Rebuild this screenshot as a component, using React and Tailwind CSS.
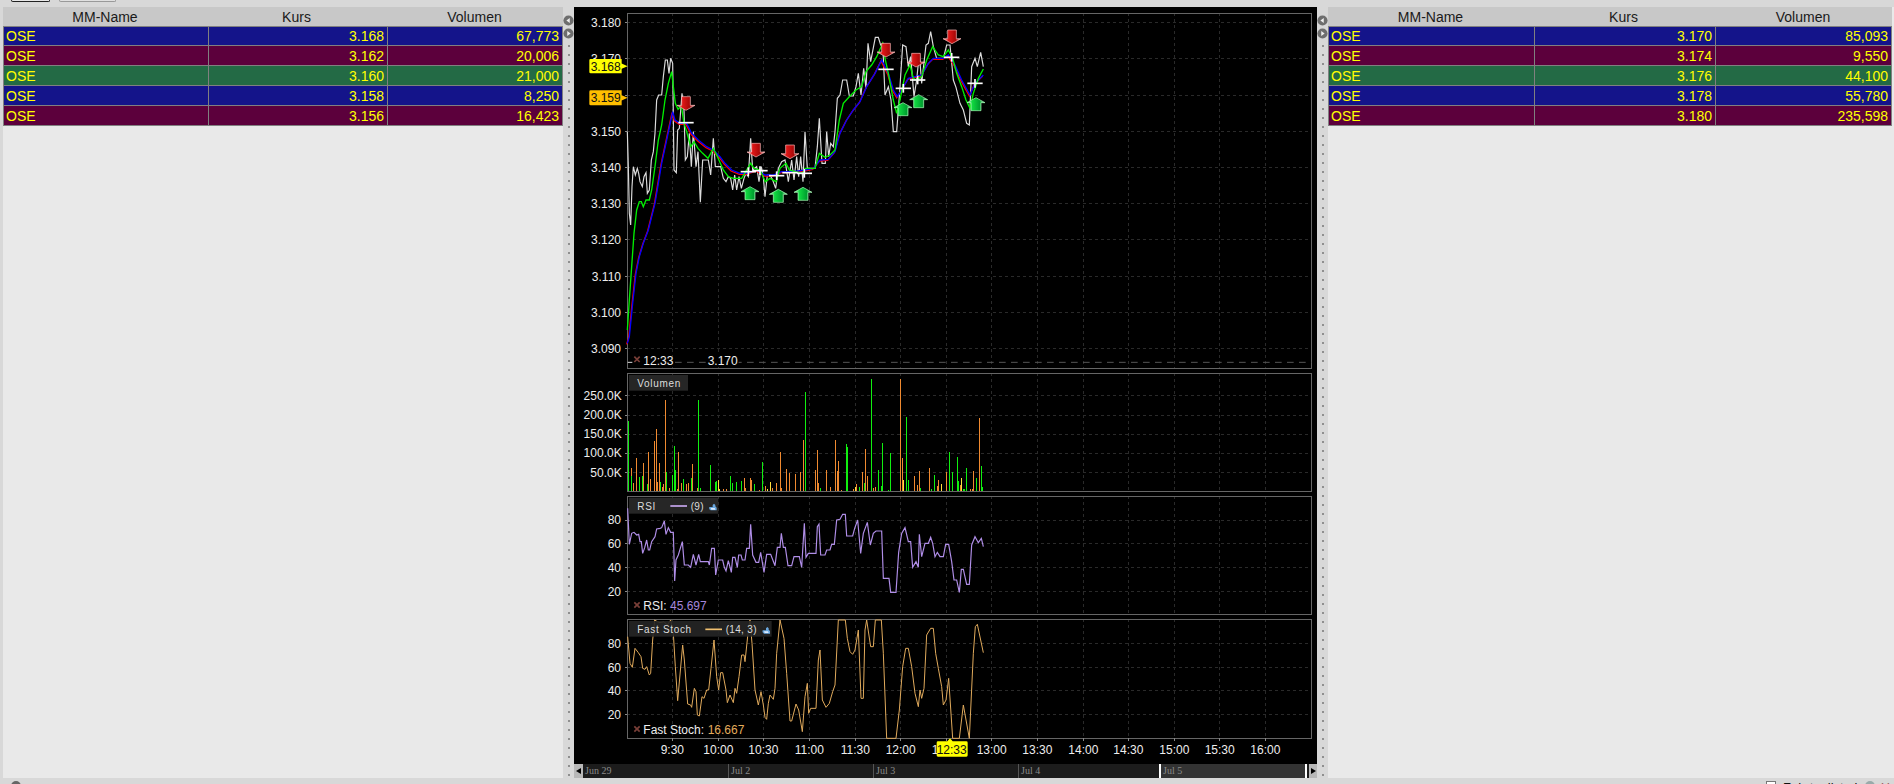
import React from 'react';

// all chart coordinates are in 3x pixels, one stroke of 3 = 1px on screen
const gridXs = [337, 475, 610, 748, 886, 1022, 1160, 1295, 1432, 1570, 1705, 1843, 1979, 2116];
const PLOT_L = 202;
const PLOT_R = 2255;

const bidRows = [
  ['OSE', '3.168', '67,773', 'blue'],
  ['OSE', '3.162', '20,006', 'maroon'],
  ['OSE', '3.160', '21,000', 'green'],
  ['OSE', '3.158', '8,250', 'blue'],
  ['OSE', '3.156', '16,423', 'maroon'],
];
const askRows = [
  ['OSE', '3.170', '85,093', 'blue'],
  ['OSE', '3.174', '9,550', 'maroon'],
  ['OSE', '3.176', '44,100', 'green'],
  ['OSE', '3.178', '55,780', 'blue'],
  ['OSE', '3.180', '235,598', 'maroon'],
];
const rowColors = { blue: 'bg-[#14148a]', maroon: 'bg-[#5c003c]', green: 'bg-[#236a45]' };

const priceLine = '202,395 205,500 208,640 212,675 216,560 220,500 226,525 232,505 236,520 240,545 247,560 252,530 258,518 262,580 268,570 274,480 280,455 285,400 290,300 296,285 305,285 310,230 316,180 322,180 327,220 332,175 338,190 342,510 349,518 353,390 358,385 366,280 372,330 376,480 382,470 388,400 394,500 400,395 408,500 414,455 421,607 428,480 445,480 452,525 460,415 466,500 482,500 490,535 498,545 505,530 512,535 518,570 524,525 530,570 537,530 544,565 552,535 558,520 565,530 572,415 578,510 590,500 597,545 604,500 610,530 615,590 622,525 630,525 638,540 647,565 655,505 665,485 675,480 685,545 695,480 702,540 710,470 716,530 722,470 729,545 735,395 742,505 765,505 772,440 778,355 786,490 796,490 800,395 806,470 812,430 820,440 825,395 832,295 840,285 848,240 860,240 868,288 880,288 888,260 895,220 903,285 911,205 918,265 924,130 932,185 946,112 955,112 962,135 968,130 975,285 985,260 993,300 1000,395 1010,395 1018,290 1028,135 1038,140 1045,200 1052,170 1062,290 1070,240 1078,160 1085,250 1098,135 1105,130 1112,95 1120,140 1130,175 1150,175 1160,135 1170,135 1180,240 1188,262 1200,310 1210,330 1220,370 1228,375 1235,200 1245,175 1252,200 1262,157 1270,200';
const fastMa = '202,990 208,900 215,800 222,700 230,630 238,605 244,605 250,620 258,600 268,600 275,570 285,500 295,420 305,375 315,300 325,250 335,215 340,260 346,310 354,328 364,318 372,370 380,395 392,440 402,425 414,445 428,460 444,475 460,445 470,465 490,510 505,530 520,535 545,535 560,510 572,490 582,505 600,510 616,545 630,535 648,545 660,505 678,490 688,510 705,515 728,520 735,505 765,505 778,460 795,472 810,465 825,450 838,360 850,310 870,288 888,270 905,260 918,215 935,195 950,170 968,130 975,175 985,220 1000,300 1010,340 1020,300 1035,225 1050,195 1060,235 1070,240 1085,230 1100,180 1118,140 1135,165 1150,170 1165,150 1178,175 1190,220 1205,260 1218,300 1230,325 1240,280 1255,235 1270,207';
const slowMa = '202,1030 208,1010 218,910 228,820 238,770 250,730 265,690 285,610 305,490 320,420 338,335 345,360 360,370 380,370 395,400 415,420 440,440 460,450 480,470 495,490 515,510 540,520 560,520 590,510 615,525 640,525 665,515 700,515 735,510 760,505 780,480 805,478 825,455 840,400 860,360 880,330 900,305 920,260 945,220 965,180 985,220 1000,270 1012,290 1025,270 1045,235 1065,230 1085,225 1105,190 1120,175 1150,175 1165,165 1185,195 1205,240 1230,285 1245,250 1270,225';
const rsiLine = '203,430 208,538 215,505 222,502 230,510 236,508 240,530 244,530 248,565 254,548 260,525 265,555 269,555 275,530 285,515 290,492 300,490 305,488 313,468 318,508 325,488 332,502 340,502 344,648 348,585 355,570 367,530 373,600 385,600 392,607 400,568 408,600 416,568 421,590 445,590 448,600 455,550 463,550 467,630 475,585 488,585 493,607 498,618 505,587 514,622 518,577 525,577 532,607 536,570 543,570 547,585 555,585 560,550 568,550 572,478 578,570 588,592 596,592 602,562 612,622 620,568 632,568 645,602 652,547 660,547 664,505 670,547 676,547 684,602 695,602 702,575 718,575 725,607 733,475 738,577 745,565 768,565 772,485 777,477 782,570 795,570 800,555 810,555 815,538 823,538 830,465 840,463 848,448 856,448 860,513 878,513 884,490 893,465 902,565 910,505 922,472 931,540 940,505 948,498 965,498 970,640 987,640 992,682 1008,682 1016,562 1025,505 1035,488 1045,530 1052,530 1058,607 1068,590 1075,607 1078,508 1085,575 1095,535 1105,535 1112,517 1118,535 1125,575 1132,562 1140,575 1150,575 1157,538 1166,538 1175,590 1182,645 1190,645 1198,682 1204,613 1210,613 1220,658 1228,658 1235,540 1245,515 1255,533 1264,520 1270,545';
const stochLine = '203,80 210,160 217,172 225,115 235,128 243,140 248,175 255,178 260,170 268,195 272,190 278,90 284,30 292,35 300,38 312,35 322,45 332,30 340,70 346,170 353,272 368,105 373,150 383,282 392,285 395,292 403,235 408,245 412,315 418,318 426,260 432,265 440,240 446,240 453,175 462,90 470,200 476,240 482,188 488,188 498,240 502,278 510,255 520,278 525,235 530,250 537,200 545,135 552,135 555,155 565,60 570,30 576,100 585,240 595,285 603,245 610,285 615,322 620,328 625,280 630,255 640,268 645,235 650,130 660,30 672,85 680,190 690,333 695,333 708,282 716,300 727,365 735,260 742,220 746,310 752,295 768,295 775,150 780,120 787,270 798,292 808,280 818,245 825,225 835,30 856,30 862,85 870,125 878,133 885,120 895,60 903,265 910,265 915,60 920,30 932,110 940,110 946,30 964,30 970,130 980,385 1008,385 1018,300 1028,170 1037,115 1045,115 1055,170 1065,250 1075,290 1080,240 1085,265 1092,235 1100,75 1112,55 1120,55 1127,130 1135,175 1145,230 1150,285 1158,270 1166,205 1178,385 1198,385 1210,285 1228,385 1240,130 1246,50 1252,43 1270,128';

const greenBars = [[205,168],[213,333],[238,335],[248,333],[262,357],[300,350],[318,322],[338,330],[344,243],[347,315],[370,342],[395,338],[415,105],[421,368],[452,300],[467,350],[470,348],[511,333],[518,353],[530,350],[545,347],[583,357],[607,291],[736,81],[780,368],[858,237],[862,245],[897,365],[913,353],[933,308],[935,42],[955,315],[965,362],[968,233],[985,375],[992,264],[1039,156],[1046,345],[1080,370],[1115,372],[1123,330],[1168,261],[1178,321],[1192,276],[1195,347],[1210,372],[1213,372],[1220,309],[1250,339],[1265,303],[1268,365]];
const orangeBars = [[213,310],[220,355],[229,279],[250,295],[265,262],[271,342],[283,228],[290,192],[292,350],[298,294],[308,365],[310,357],[316,105],[327,368],[355,261],[352,372],[364,354],[380,358],[386,353],[397,297],[412,369],[490,372],[500,372],[553,340],[556,368],[572,340],[574,345],[598,375],[616,363],[637,370],[649,354],[660,261],[663,368],[679,312],[688,324],[706,327],[721,321],[730,225],[766,315],[772,255],[775,353],[799,315],[811,365],[826,225],[832,318],[836,288],[844,375],[881,372],[890,357],[907,321],[916,252],[922,333],[940,370],[946,366],[1021,42],[1027,279],[1063,333],[1072,360],[1078,318],[1108,309],[1132,363],[1135,345],[1159,321],[1201,359],[1232,372],[1238,372],[1241,318],[1258,159]];
const yellowBars = [[475,345],[477,372],[622,372],[631,351],[885,366],[1030,345],[1144,357],[1204,339]];

const sellArrows = [[378, 290], [588, 430], [690, 435], [978, 130], [1068, 160], [1176, 90]];
const buyArrows = [[570, 560], [655, 568], [729, 562], [1029, 308], [1076, 284], [1248, 293]];
const marks = [[378, 368, 0], [565, 515, 1], [600, 512, 1], [650, 527, 1], [690, 518, 0], [733, 520, 1], [978, 208, 0], [1030, 265, 1], [1073, 240, 1], [1175, 172, 1], [1245, 250, 1]];

const DepthTable = ({ rows, cols }) => (
  <div className="text-[14px] leading-none">
    <div className={`grid ${cols} h-[19px] items-center bg-[#c8c8c8] text-[#1a1a1a] text-center`}>
      <span>MM-Name</span>
      <span>Kurs</span>
      <span>Volumen</span>
    </div>
    <div className="border-t border-l border-[#808080]">
      {rows.map((r, i) => (
        <div key={i} className={`grid ${cols} ${i === 0 ? 'h-[19px]' : 'h-[20px]'} ${rowColors[r[3]]} text-[#ffff00] border-b border-r border-[#808080]`}>
          <span className="flex items-center pl-[2px]">{r[0]}</span>
          <span className="flex items-center justify-end pr-[3px] border-l border-[#808080]">{r[1]}</span>
          <span className="flex items-center justify-end pr-[3px] border-l border-[#808080]">{r[2]}</span>
        </div>
      ))}
    </div>
  </div>
);

const Splitter = () => (
  <div className="w-[11px] shrink-0 bg-[#d8d8d8] flex flex-col items-center pt-[7px] overflow-hidden">
    {['M8 3.5 L4 6.5 L8 9.5 Z', 'M5 3.5 L9 6.5 L5 9.5 Z'].map((d, i) => (
      <svg key={i} width="11" height="13" viewBox="0 0 13 13" className="shrink-0">
        <circle cx="6.5" cy="6.5" r="6" fill="#6e6e6e" />
        <path d={d} fill="#f0f0f0" />
      </svg>
    ))}
    <div className="flex flex-col items-center gap-[7px] pt-[5px]">
      {Array.from({ length: 82 }).map((_, i) => (
        <span key={i} className="block w-[2px] h-[2px] rounded-full bg-[#777]" />
      ))}
    </div>
  </div>
);

const Grid = ({ top, bottom, ys }) => (
  <g shapeRendering="crispEdges">
    <g stroke="#2a2a2a" strokeWidth="3" strokeDasharray="9 9">
      {gridXs.map((x) => <line key={x} x1={x} x2={x} y1={top} y2={bottom} />)}
      {ys.map((y) => <line key={y} x1={PLOT_L} x2={PLOT_R} y1={y} y2={y} />)}
    </g>
    <g stroke="#888" strokeWidth="3">
      {ys.map((y) => <line key={y} x1={PLOT_L - 7} x2={PLOT_L} y1={y} y2={y} />)}
    </g>
    <rect x={PLOT_L} y={top} width={PLOT_R - PLOT_L} height={bottom - top} fill="none" stroke="#666" strokeWidth="3" />
  </g>
);

const AxisLabels = ({ items, right = 183 }) => items.map(([label, y]) => (
  <text key={label} x={right} y={y + 13} textAnchor="end" fontSize="36" fill="#eee">{label}</text>
));

const Wrench = ({ x, y }) => (
  <g transform={`translate(${x} ${y})`}>
    <path d="M2 12 L12 12 L12 6 L16 2 L20 6 L20 10 L24 14 L24 22 L6 22 Q0 20 2 12 Z" fill="#6aa8e0" />
    <path d="M6 15 L18 15 L20 20 L8 20 Z" fill="#dbeafe" />
  </g>
);

const CloseMark = ({ x, y }) => (
  <path d={`M${x - 8} ${y - 8} L${x + 8} ${y + 8} M${x + 8} ${y - 8} L${x - 8} ${y + 8}`} stroke="#7a3f38" strokeWidth="5" />
);

const PriceTag = ({ y, h, fill, label }) => (
  <g>
    <path d={`M88 ${y + 4} Q88 ${y} 92 ${y} L185 ${y} L185 ${y + h / 2 - 8} L203 ${y + h / 2} L185 ${y + h / 2 + 8} L185 ${y + h} L92 ${y + h} Q88 ${y + h} 88 ${y + h - 4} Z`} fill={fill} />
    <text x="92" y={y + h / 2 + 13} fontSize="36" fill="#111">{label}</text>
  </g>
);

const PriceChart = () => (
  <svg className="block w-[743px] h-[364px]" viewBox="42 21 2229 1092">
    <defs>
      <linearGradient id="sell">
        <stop offset="0" stopColor="#ffe4e4" />
        <stop offset="0.3" stopColor="#e01818" />
        <stop offset="0.7" stopColor="#a80808" />
        <stop offset="1" stopColor="#ffd4d4" />
      </linearGradient>
      <linearGradient id="buy">
        <stop offset="0" stopColor="#c8ffd0" />
        <stop offset="0.3" stopColor="#10d840" />
        <stop offset="0.7" stopColor="#00a030" />
        <stop offset="1" stopColor="#c8ffd0" />
      </linearGradient>
    </defs>
    <Grid top={40} bottom={1105} ys={[68, 176, 287, 395, 503, 611, 719, 830, 938, 1046]} />
    <AxisLabels items={[['3.180', 68], ['3.170', 176], ['3.150', 395], ['3.140', 503], ['3.130', 611], ['3.120', 719], ['3.110', 830], ['3.100', 938], ['3.090', 1046]]} />
    <line x1="345" x2={PLOT_R} y1="1087" y2="1087" stroke="#555" strokeWidth="3" strokeDasharray="20 16" />
    <rect x="440" y="1065" width="96" height="36" fill="#000" />
    <line x1="203" x2="217" y1="1087" y2="1087" stroke="#ddd" strokeWidth="3" />
    <polyline points={priceLine} fill="none" stroke="#dcdcdc" strokeWidth="3.5" />
    <polyline points={slowMa} fill="none" stroke="#ff0000" strokeWidth="4" transform="translate(-2 3)" />
    <polyline points={slowMa} fill="none" stroke="#0000ff" strokeWidth="4" />
    <polyline points={fastMa} fill="none" stroke="#00f000" strokeWidth="4" />
    {marks.map(([x, y, cross], i) => (
      <g key={i} stroke="#fff" strokeWidth="5">
        <line x1={x - 23} x2={x + 23} y1={y} y2={y} />
        {cross ? <line x1={x} x2={x} y1={y - 13} y2={y + 13} /> : null}
      </g>
    ))}
    {sellArrows.map(([x, y]) => (
      <path key={x} d={`M${x - 13} ${y} H${x + 13} V${y + 26} H${x + 27} L${x} ${y + 41} L${x - 27} ${y + 26} H${x - 13} Z`} fill="url(#sell)" stroke="#ffb8b8" strokeWidth="2" />
    ))}
    {buyArrows.map(([x, y]) => (
      <path key={x} d={`M${x} ${y} L${x + 27} ${y + 15} H${x + 15} V${y + 39} H${x - 15} V${y + 15} H${x - 27} Z`} fill="url(#buy)" stroke="#a8ffb8" strokeWidth="2" />
    ))}
    <PriceTag y={177} h={43} fill="#ffff00" label="3.168" />
    <PriceTag y={271} h={45} fill="#ffbf00" label="3.159" />
    <CloseMark x={231} y={1078} />
    <text x="250" y="1094" fontSize="36" fill="#eee">12:33</text>
    <text x="443" y="1094" fontSize="36" fill="#eee">3.170</text>
  </svg>
);

const VolumeChart = () => (
  <svg className="block w-[743px] h-[123px]" viewBox="42 18 2229 369">
    <Grid top={25} bottom={378} ys={[92, 150, 207, 264, 322]} />
    <AxisLabels right={185} items={[['250.0K', 92], ['200.0K', 150], ['150.0K', 207], ['100.0K', 264], ['50.0K', 322]]} />
    <g strokeWidth="3" shapeRendering="crispEdges">
      {orangeBars.map(([x, y]) => <line key={x} x1={x} x2={x} y1={y} y2={377} stroke="#f08a30" />)}
      {yellowBars.map(([x, y]) => <line key={x} x1={x} x2={x} y1={y} y2={377} stroke="#ffe040" />)}
      {greenBars.map(([x, y]) => <line key={x} x1={x} x2={x} y1={y} y2={377} stroke="#10f010" />)}
    </g>
    <rect x="207" y="30" width="177" height="47" fill="#262626" />
    <text x="232" y="65" fontSize="30" letterSpacing="2" fill="#ddd">Volumen</text>
  </svg>
);

const RsiChart = () => (
  <svg className="block w-[743px] h-[123px]" viewBox="42 387 2229 369">
    <Grid top={393} bottom={747} ys={[465, 535, 607, 680]} />
    <AxisLabels items={[['80', 465], ['60', 535], ['40', 607], ['20', 680]]} />
    <polyline points={rsiLine} fill="none" stroke="#b08ee8" strokeWidth="3.5" />
    <rect x="207" y="398" width="268" height="48" fill="#262626" />
    <text x="232" y="434" fontSize="30" letterSpacing="2" fill="#ddd">RSI</text>
    <line x1="331" x2="381" y1="423" y2="423" stroke="#c8a8f0" strokeWidth="5" />
    <text x="392" y="434" fontSize="30" letterSpacing="1" fill="#ddd">(9)</text>
    <Wrench x={446} y={414} />
    <CloseMark x={231} y={720} />
    <text x="250" y="735" fontSize="36" fill="#eee">RSI:</text>
    <text x="330" y="735" fontSize="36" fill="#a586dc">45.697</text>
  </svg>
);

const timeLabels = ['9:30', '10:00', '10:30', '11:00', '11:30', '12:00', '12:30', '13:00', '13:30', '14:00', '14:30', '15:00', '15:30', '16:00'];

const StochChart = () => (
  <svg className="block w-[743px] h-[147px]" viewBox="42 21 2229 441">
    <Grid top={28} bottom={385} ys={[100, 172, 241, 314]} />
    <AxisLabels items={[['80', 100], ['60', 172], ['40', 241], ['20', 314]]} />
    <g stroke="#888" strokeWidth="3" shapeRendering="crispEdges">
      {gridXs.map((x) => <line key={x} x1={x} x2={x} y1={385} y2={392} />)}
    </g>
    {timeLabels.map((t, i) => (
      <text key={t} x={gridXs[i]} y="431" textAnchor="middle" fontSize="36" fill="#eee">{t}</text>
    ))}
    <polyline points={stochLine} fill="none" stroke="#e0aa5c" strokeWidth="3" />
    <rect x="207" y="33" width="428" height="47" fill="#262626" fillOpacity="0.9" />
    <text x="232" y="69" fontSize="30" letterSpacing="2" fill="#ddd">Fast Stoch</text>
    <line x1="436" x2="486" y1="58" y2="58" stroke="#f0c070" strokeWidth="5" />
    <text x="497" y="69" fontSize="30" letterSpacing="1" fill="#ddd">(14, 3)</text>
    <Wrench x={606} y={49} />
    <CloseMark x={231} y={357} />
    <text x="250" y="372" fontSize="36" fill="#eee">Fast Stoch:</text>
    <text x="443" y="372" fontSize="36" fill="#e4ac5c">16.667</text>
    <path d="M1130 398 Q1130 394 1134 394 L1162 394 L1170 385 L1178 394 L1219 394 Q1223 394 1223 398 L1223 436 Q1223 440 1219 440 L1134 440 Q1130 440 1130 436 Z" fill="#ffff00" />
    <text x="1175" y="431" textAnchor="middle" fontSize="36" fill="#111">12:33</text>
  </svg>
);

const DateStrip = () => (
  <div className="flex h-[14px] bg-[#1c1c1c] font-['Liberation_Serif',serif] text-[10px] leading-[14px] text-[#8a8a8a]">
    <span className="w-[9px] shrink-0 bg-[#b8b8b8] flex items-center justify-center">
      <span className="w-0 h-0 border-y-[3px] border-y-transparent border-r-[5px] border-r-black" />
    </span>
    <span className="w-[145px] shrink-0 pl-[2px]">Jun 29</span>
    <span className="w-[145px] shrink-0 pl-[2px] border-l border-[#555]">Jul 2</span>
    <span className="w-[145px] shrink-0 pl-[2px] border-l border-[#555]">Jul 3</span>
    <span className="w-[141px] shrink-0 pl-[2px] border-l border-[#555]">Jul 4</span>
    <span className="w-[148px] shrink-0 pl-[2px] bg-[#333] border-x-2 border-white">Jul 5</span>
    <span className="w-[2px] shrink-0" />
    <span className="flex-1 bg-[#b8b8b8] flex items-center justify-center">
      <span className="w-0 h-0 border-y-[3px] border-y-transparent border-l-[5px] border-l-black" />
    </span>
  </div>
);

const App = () => (
  <div className="w-[1894px] h-[784px] overflow-hidden flex flex-col bg-[#d8d8d8] font-['Liberation_Sans',sans-serif]">
    <div className="h-[7px] shrink-0 flex items-start pl-[11px] gap-[9px]">
      <span className="block w-[39px] h-[2px] bg-[#e8e8e8] border-b border-x border-[#222] rounded-b-[2px]" />
      <span className="block w-[57px] h-[2px] bg-[#e0e0e0] border-b border-x border-[#999] rounded-b-[2px]" />
    </div>
    <div className="h-[771px] shrink-0 flex">
      <div className="w-[563px] shrink-0 pl-[3px]">
        <div className="h-full bg-[#e9e9e9]">
          <DepthTable rows={bidRows} cols="grid-cols-[204px_179px_1fr]" />
        </div>
      </div>
      <Splitter />
      <div className="w-[743px] shrink-0 bg-black">
        <PriceChart />
        <VolumeChart />
        <RsiChart />
        <StochChart />
        <DateStrip />
      </div>
      <Splitter />
      <div className="flex-1 bg-[#e9e9e9] pr-[2px]">
        <DepthTable rows={askRows} cols="grid-cols-[205px_181px_1fr]" />
      </div>
    </div>
    <div className="flex-1 flex items-start justify-between pl-[11px] pr-[4px] pt-[3px] overflow-hidden">
      <span className="block w-[10px] h-[10px] rounded-full bg-[#666]" />
      <div className="flex items-start text-[13px] leading-none text-[#111]">
        <span className="block w-[10px] h-[10px] bg-white border border-[#777] mr-[7px]" />
        <span className="w-[75px] mr-[7px] whitespace-nowrap overflow-hidden">Fahrtenliste b</span>
        <span className="block w-[10px] h-[10px] rounded-full bg-[#9aa] mr-[5px]" />
        <span className="block w-[10px] h-[10px] text-[#8b3a3a] font-bold">✕</span>
      </div>
    </div>
  </div>
);

export default App;
